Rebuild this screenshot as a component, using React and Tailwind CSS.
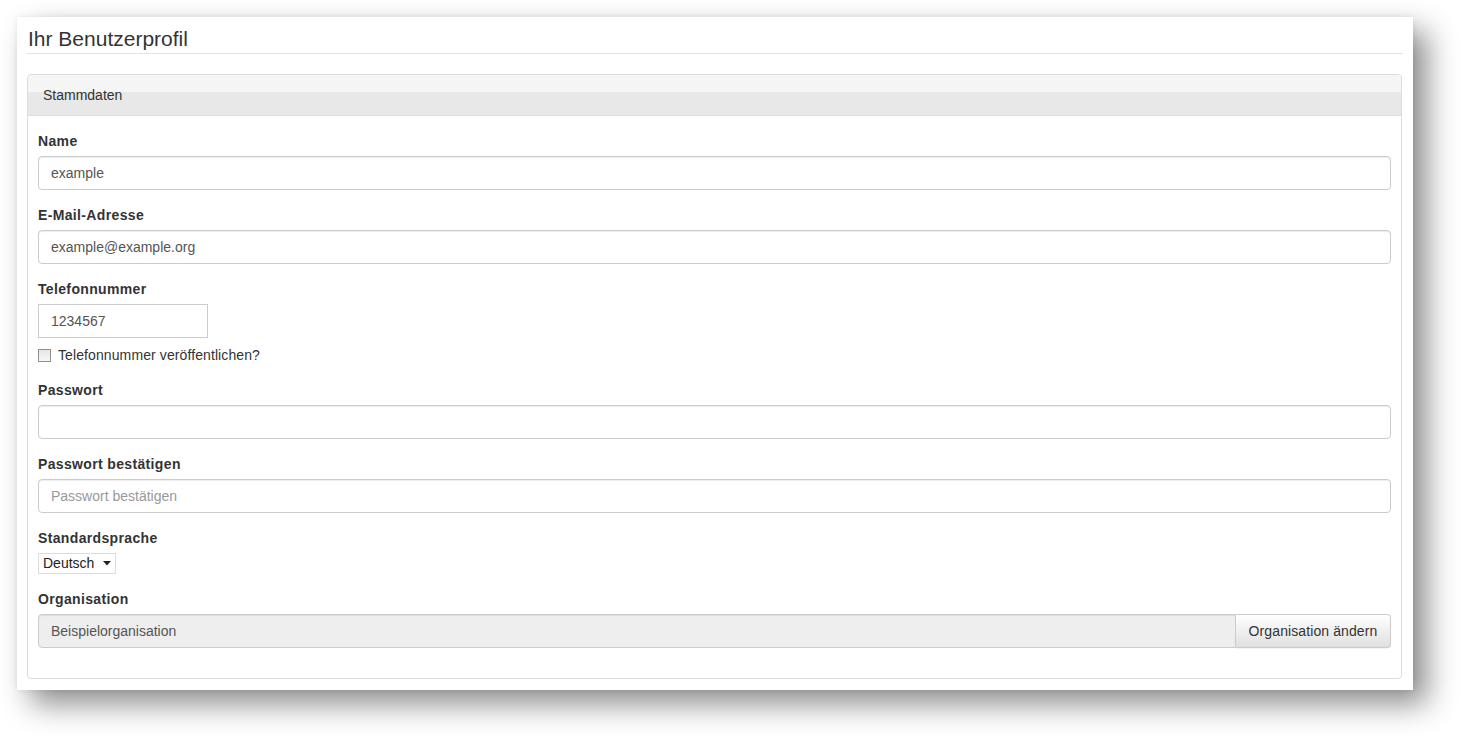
import React from "react";

const font = { fontFamily: '"Liberation Sans", Arial, sans-serif' };

function Label({ children }) {
  return <div className="text-[14px] leading-[20px] font-bold tracking-[0.35px] text-[#333] mb-[5px]">{children}</div>;
}

function TextInput({ value, placeholder }) {
  return (
    <div className="h-[34px] w-full border border-[#ccc] rounded-[4px] bg-white shadow-[inset_0_1px_1px_rgba(0,0,0,0.075)] px-[12px] flex items-center text-[14px]">
      {value ? <span className="text-[#555]">{value}</span> : <span className="text-[#999]">{placeholder}</span>}
    </div>
  );
}

export default function App() {
  return (
    <div className="w-[1461px] h-[739px] bg-white pt-[17px] pl-[17px]" style={font}>
      <div className="w-[1396px] h-[673px] bg-white px-[10px] pt-[8px] shadow-[14px_14px_28px_rgba(0,0,0,0.45),0_0_6px_rgba(0,0,0,0.08)]">
        <div className="border-b border-[#e3e3e3] pl-[1px]">
          <h1 className="text-[21px] leading-[28px] text-[#333] font-normal">Ihr Benutzerprofil</h1>
        </div>
        <div className="mt-[20px] border border-[#ddd] rounded-[4px] w-[1375px]">
          <div className="h-[41px] bg-[linear-gradient(#f5f5f5_0%,#f5f5f5_43%,#e8e8e8_43%,#e8e8e8_100%)] border-b border-[#ddd] rounded-t-[3px] pl-[15px] flex items-center text-[14px] text-[#333]">
            Stammdaten
          </div>
          <div className="pt-[15px] pl-[10px] pr-[10px] pb-[15px]">
            <div className="mb-[15px]">
              <Label>Name</Label>
              <TextInput value="example" />
            </div>
            <div className="mb-[15px]">
              <Label>E-Mail-Adresse</Label>
              <TextInput value="example@example.org" />
            </div>
            <div className="mb-[15px]">
              <Label>Telefonnummer</Label>
              <div className="h-[34px] w-[170px] border border-[#ccc] bg-white px-[12px] flex items-center text-[14px] text-[#555]">
                1234567
              </div>
              <div className="mt-[7px] flex items-center h-[20px] text-[14px] tracking-[0.1px] text-[#333]">
                <span className="w-[13px] h-[13px] border border-[#8f8f8f] bg-[linear-gradient(#e6e6e6,#f7f7f7)] mr-[7px]"></span>
                Telefonnummer veröffentlichen?
              </div>
            </div>
            <div className="mb-[15px]">
              <Label>Passwort</Label>
              <TextInput value="" placeholder="" />
            </div>
            <div className="mb-[15px]">
              <Label>Passwort bestätigen</Label>
              <TextInput value="" placeholder="Passwort bestätigen" />
            </div>
            <div className="mb-[15px]">
              <Label>Standardsprache</Label>
              <div className="h-[21px] w-[78px] border border-[#dcdcdc] bg-white flex items-center pl-[4px] pr-[4px] text-[14px] text-[#222]">
                <span>Deutsch</span>
                <svg className="ml-auto" width="8" height="5" viewBox="0 0 8 5">
                  <path d="M0 0 H8 L4 4.5 Z" fill="#222" />
                </svg>
              </div>
            </div>
            <div className="mb-[15px]">
              <Label>Organisation</Label>
              <div className="flex h-[34px]">
                <div className="flex-1 border border-[#ccc] rounded-l-[4px] bg-[#eee] px-[12px] flex items-center text-[14px] text-[#555] shadow-[inset_0_1px_1px_rgba(0,0,0,0.075)]">
                  Beispielorganisation
                </div>
                <div className="w-[155px] border border-l-0 border-[#ccc] rounded-r-[4px] bg-[linear-gradient(#fff,#e0e0e0)] flex items-center justify-center text-[14px] tracking-[0.1px] text-[#333] shadow-[0_1px_1px_rgba(0,0,0,0.05)]">
                  Organisation ändern
                </div>
              </div>
            </div>
          </div>
        </div>
      </div>
    </div>
  );
}
